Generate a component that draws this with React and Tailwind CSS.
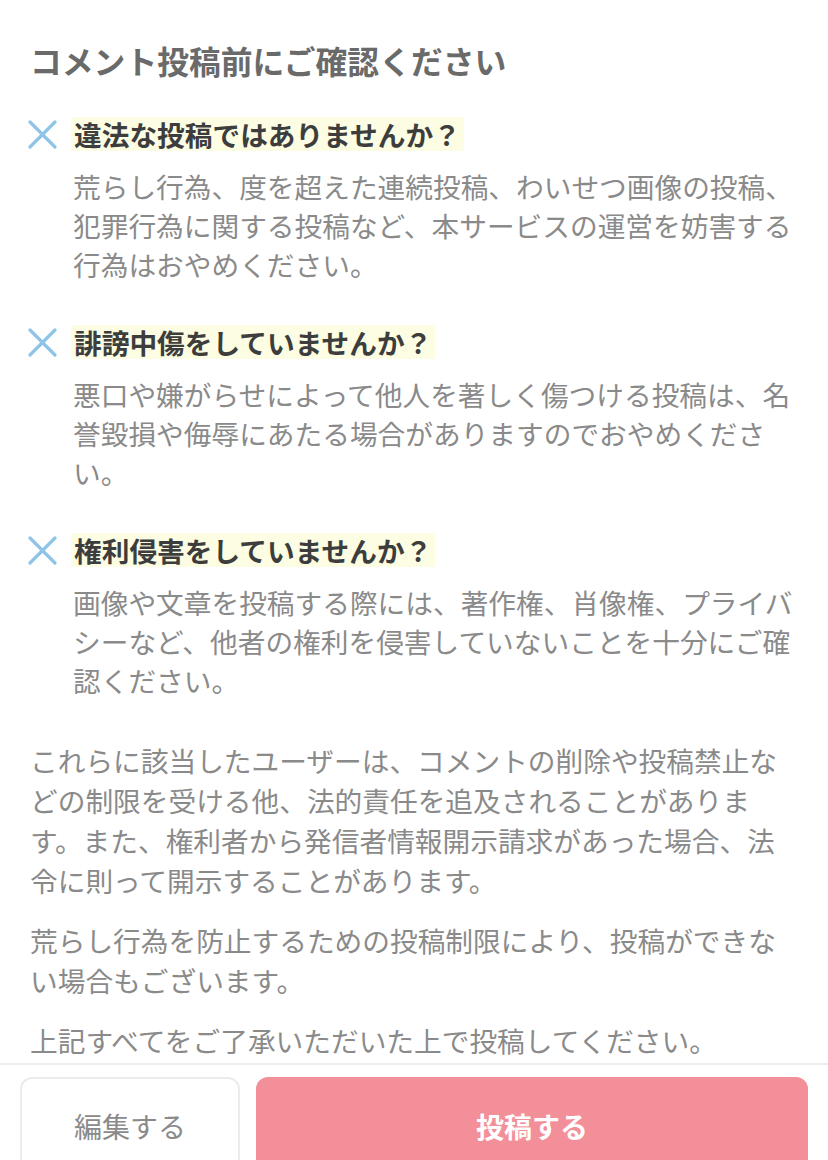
import React from 'react';

const FONT = { fontFamily: '"Noto Sans CJK JP", "Noto Sans", sans-serif' };

const sections = [
  {
    title: '違法な投稿ではありませんか？',
    body: '荒らし行為、度を超えた連続投稿、わいせつ画像の投稿、犯罪行為に関する投稿など、本サービスの運営を妨害する行為はおやめください。',
  },
  {
    title: '誹謗中傷をしていませんか？',
    body: '悪口や嫌がらせによって他人を著しく傷つける投稿は、名誉毀損や侮辱にあたる場合がありますのでおやめください。',
  },
  {
    title: '権利侵害をしていませんか？',
    body: '画像や文章を投稿する際には、著作権、肖像権、プライバシーなど、他者の権利を侵害していないことを十分にご確認ください。',
  },
];

const Cross = () => (
  <svg width="30" height="30" viewBox="0 0 30 30" className="shrink-0">
    <path d="M2 3 L27 28 M27 3 L2 28" stroke="#8fc4e6" strokeWidth="3.2" strokeLinecap="round" />
  </svg>
);

export default function App() {
  return (
    <div className="w-[828px] h-[1160px] overflow-hidden bg-white flex flex-col" style={FONT}>
      <div className="flex-1 min-h-0 pt-[40px] pl-[30px] pr-[28px]">
        <h1 className="text-[31.8px] leading-[40px] font-bold text-[#6a6a6a]">コメント投稿前にご確認ください</h1>

        <div className="mt-[34px] flex flex-col gap-[38px]">
          {sections.map(s => (
            <div key={s.title}>
              <div className="flex items-center -ml-[2px] h-[40px]">
                <Cross />
                <span className="ml-[13px] bg-[#fcfde2] px-[3px] text-[27.7px] leading-[34px] font-bold text-[#3d3d3d]">
                  {s.title}
                </span>
              </div>
              <p className="mt-[13px] pl-[43px] text-[27.7px] leading-[39px] text-[#8a8a8a]">{s.body}</p>
            </div>
          ))}
        </div>

        <div className="mt-[40px] text-[27.7px] leading-[40px] text-[#8a8a8a] flex flex-col gap-[20px]">
          <p>これらに該当したユーザーは、コメントの削除や投稿禁止などの制限を受ける他、法的責任を追及されることがあります。また、権利者から発信者情報開示請求があった場合、法令に則って開示することがあります。</p>
          <p>荒らし行為を防止するための投稿制限により、投稿ができない場合もございます。</p>
          <p>上記すべてをご了承いただいた上で投稿してください。</p>
        </div>
      </div>

      <div className="shrink-0 h-[97px] border-t-2 border-[#ededed] pt-[12px] px-[20px] flex gap-[16px]">
        <button className="w-[220px] h-[100px] rounded-[12px] border-2 border-[#ececec] bg-white text-[28px] text-[#8a8a8a] pb-[2px]" style={FONT}>
          編集する
        </button>
        <button className="flex-1 h-[100px] rounded-[12px] bg-[#f28f99] text-[28px] font-bold text-white pb-[2px]" style={FONT}>
          投稿する
        </button>
      </div>
    </div>
  );
}
